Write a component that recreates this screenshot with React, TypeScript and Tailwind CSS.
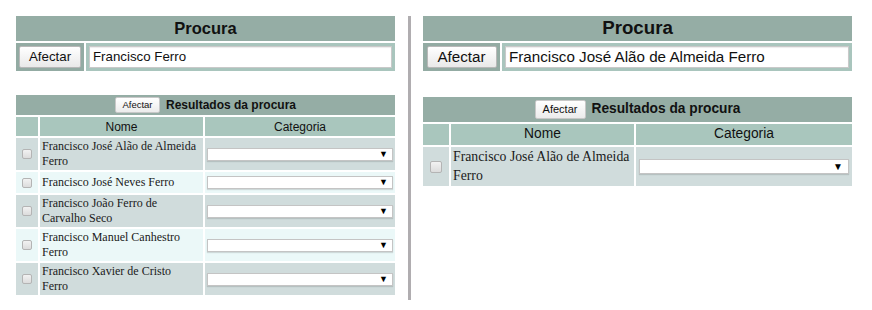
import React from "react";

type Size = {
  w: string;
  head: string;
  btnCell: string;
  btn: string;
  input: string;
  gapTop: string;
  resHead: string;
  smallBtn: string;
  cols: string;
  sub: string;
  name: string;
  select: string;
  arrow: string;
  check: string;
  selectCell: string;
};

const small: Size = {
  w: "w-[379px]",
  head: "h-[25px] text-[16.5px]",
  btnCell: "w-[68px]",
  btn: "h-[22px] w-[62px] text-[13.3px]",
  input: "h-[22px] text-[13.3px]",
  gapTop: "mt-[24px]",
  resHead: "h-[20px] text-[12px]",
  smallBtn: "h-[16px] w-[45px] text-[9.5px]",
  cols: "grid-cols-[22px_163px_190px]",
  sub: "h-[19px] text-[12px]",
  name: "text-[12px] leading-[15px] py-px",
  select: "h-[13px] my-[4px]",
  arrow: "text-[9px] pr-[4px]",
  check: "size-[10px]",
  selectCell: "px-[2px]",
};

const big: Size = {
  w: "w-[429px]",
  head: "h-[25px] text-[18.7px]",
  btnCell: "w-[77px]",
  btn: "h-[22px] w-[70px] text-[15.2px]",
  input: "h-[22px] text-[15.2px]",
  gapTop: "mt-[26px]",
  resHead: "h-[25px] text-[13.75px]",
  smallBtn: "h-[19px] w-[51px] text-[11px]",
  cols: "grid-cols-[26px_183px_216px]",
  sub: "h-[21px] text-[13.8px]",
  name: "text-[13.75px] leading-[18.5px] py-px",
  select: "h-[15px] my-[3px]",
  arrow: "text-[10px] pr-[5px]",
  check: "size-[12px]",
  selectCell: "px-[3px]",
};

const leftNames = [
  ["Francisco José Alão de Almeida", "Ferro"],
  ["Francisco José Neves Ferro"],
  ["Francisco João Ferro de", "Carvalho Seco"],
  ["Francisco Manuel Canhestro", "Ferro"],
  ["Francisco Xavier de Cristo", "Ferro"],
];

const rightNames = [["Francisco José Alão de Almeida", "Ferro"]];

const sans = "font-['Liberation_Sans',Arial,sans-serif]";
const serif = "font-['Liberation_Serif','Times_New_Roman',serif]";

function Panel({ s, query, names }: { s: Size; query: string; names: string[][] }) {
  return (
    <div className={`${s.w} flex flex-col ${sans} text-[#111]`}>
      <div className={`${s.head} bg-[#95ada5] flex items-center justify-center font-bold`}>
        Procura
      </div>
      <div className="flex gap-[2px] mt-[2px] h-[28px]">
        <div className={`${s.btnCell} bg-[#93aba3] flex items-center justify-center`}>
          <div
            className={`${s.btn} flex items-center justify-center bg-gradient-to-b from-white to-[#e9e9e9] border border-[#b8b8b8] rounded-[2px]`}
          >
            Afectar
          </div>
        </div>
        <div className="flex-1 bg-[#a9c5bd] flex items-center px-[3px]">
          <div
            className={`${s.input} w-full bg-white border border-[#c9c9c9] shadow-[inset_0_1px_1px_rgba(0,0,0,0.08)] flex items-center pl-[3px]`}
          >
            {query}
          </div>
        </div>
      </div>

      <div className={`${s.gapTop} flex flex-col gap-[2px]`}>
        <div className={`${s.resHead} bg-[#95ada5] flex items-center justify-center gap-[6px]`}>
          <div
            className={`${s.smallBtn} flex items-center justify-center bg-gradient-to-b from-white to-[#ececec] border border-[#c8c8c8] rounded-[2px] font-normal`}
          >
            Afectar
          </div>
          <span className="font-bold">Resultados da procura</span>
        </div>
        <div className={`grid ${s.cols} gap-[2px]`}>
          <div className={`${s.sub} bg-[#a9c6bd]`} />
          <div className={`${s.sub} bg-[#a9c6bd] flex items-center justify-center`}>Nome</div>
          <div className={`${s.sub} bg-[#a9c6bd] flex items-center justify-center`}>Categoria</div>
          {names.map((lines, i) => {
            const bg = i % 2 === 0 ? "bg-[#d0dcdc]" : "bg-[#ebf8f8]";
            return (
              <React.Fragment key={i}>
                <div className={`${bg} flex items-center justify-center`}>
                  <div
                    className={`${s.check} rounded-[2px] border border-[#b4b4b4] bg-gradient-to-b from-[#f2f2f2] to-[#dcdcdc]`}
                  />
                </div>
                <div className={`${bg} ${serif} ${s.name} pl-[2px] flex flex-col justify-center text-[#1a1a1a]`}>
                  {lines.map((l) => (
                    <span key={l}>{l}</span>
                  ))}
                </div>
                <div className={`${bg} ${s.selectCell} flex items-center`}>
                  <div
                    className={`${s.select} w-full bg-white border border-[#c4c4c4] shadow-[0_1px_1px_rgba(0,0,0,0.12)] flex items-center justify-end`}
                  >
                    <span className={`${s.arrow} leading-none text-black`}>▼</span>
                  </div>
                </div>
              </React.Fragment>
            );
          })}
        </div>
      </div>
    </div>
  );
}

export default function App() {
  return (
    <div className="w-[872px] h-[310px] bg-white flex items-start pt-[16px] pl-[16px]">
      <Panel s={small} query="Francisco Ferro" names={leftNames} />
      <div className="ml-[13px] mr-[12px] w-[3px] h-[284px] bg-[#b0adb0]" />
      <Panel s={big} query="Francisco José Alão de Almeida Ferro" names={rightNames} />
    </div>
  );
}
